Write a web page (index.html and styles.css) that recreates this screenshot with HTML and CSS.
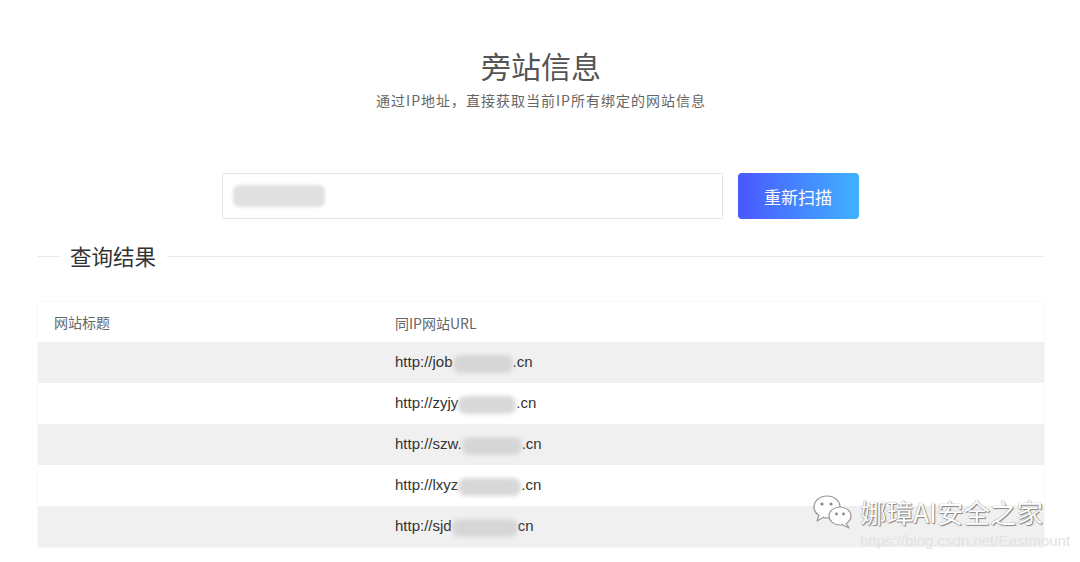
FILE: index.html
```html
<!DOCTYPE html>
<html lang="zh-CN">
<head>
<meta charset="utf-8">
<title>旁站信息</title>
<link rel="stylesheet" href="styles.css">
</head>
<body>
<div class="page">
  <header class="head">
    <h1 class="title">旁站信息</h1>
    <p class="subtitle">通过IP地址，直接获取当前IP所有绑定的网站信息</p>
  </header>

  <div class="search">
    <div class="input"><span class="blur blur-input"></span></div>
    <button class="btn">重新扫描</button>
  </div>

  <div class="section-title">
    <span class="line short"></span>
    <span class="label">查询结果</span>
    <span class="line long"></span>
  </div>

  <div class="table">
    <div class="row thead">
      <div class="c1">网站标题</div>
      <div class="c2">同IP网站URL</div>
    </div>
    <div class="row gray">
      <div class="c1"></div>
      <div class="c2">http://job<span class="blur" style="width:60px"></span>.cn</div>
    </div>
    <div class="row">
      <div class="c1"></div>
      <div class="c2">http://zyjy<span class="blur" style="width:58px"></span>.cn</div>
    </div>
    <div class="row gray">
      <div class="c1"></div>
      <div class="c2">http://szw.<span class="blur" style="width:60px"></span>.cn</div>
    </div>
    <div class="row">
      <div class="c1"></div>
      <div class="c2">http://lxyz<span class="blur" style="width:63px"></span>.cn</div>
    </div>
    <div class="row gray">
      <div class="c1"></div>
      <div class="c2">http://sjd<span class="blur" style="width:66px"></span>cn</div>
    </div>
  </div>
</div>

<div class="watermark">
  <div class="wm-top">
    <svg class="wechat" width="42" height="36" viewBox="0 0 42 36">
      <ellipse cx="15" cy="13" rx="13" ry="11" fill="#fff" stroke="#999" stroke-width="1.2"/>
      <path d="M7 21 L5 27 L12 23" fill="#fff" stroke="#999" stroke-width="1.2" stroke-linejoin="round"/>
      <circle cx="10" cy="10" r="1.6" fill="#888"/>
      <circle cx="19" cy="10" r="1.6" fill="#888"/>
      <ellipse cx="28" cy="22" rx="11" ry="9" fill="#fff" stroke="#999" stroke-width="1.2"/>
      <path d="M34 29 L37 34 L30 30.5" fill="#fff" stroke="#999" stroke-width="1.2" stroke-linejoin="round"/>
      <circle cx="24.5" cy="20" r="1.4" fill="#888"/>
      <circle cx="31.5" cy="20" r="1.4" fill="#888"/>
    </svg>
    <span class="wm-name">娜璋AI安全之家</span>
  </div>
  <div class="wm-url">https://blog.csdn.net/Eastmount</div>
</div>
</body>
</html>
```

FILE: styles.css
```css
* { box-sizing: border-box; }
html, body { margin: 0; padding: 0; background: #fff; }
body {
  width: 1080px;
  height: 562px;
  overflow: hidden;
  position: relative;
  font-family: "Liberation Sans", "Noto Sans CJK SC", sans-serif;
  color: #333;
}
.page { padding: 0 36px 0 38px; }
.head { text-align: center; }
.title {
  margin: 45px 0 0;
  font-family: "Noto Sans CJK SC", sans-serif;
  font-weight: 400;
  font-size: 30px;
  line-height: 40px;
  color: #555;
}
.subtitle {
  margin: 5px 0 0;
  font-family: "Noto Sans CJK SC", sans-serif;
  font-size: 14px;
  letter-spacing: 1px;
  line-height: 20px;
  color: #666;
}
.search {
  margin-top: 63px;
  display: flex;
  justify-content: center;
  gap: 15px;
}
.input {
  width: 501px;
  height: 46px;
  margin-left: 148px;
  border: 1px solid #e4e4e4;
  border-radius: 2px;
  display: flex;
  align-items: center;
  padding-left: 10px;
}
.btn {
  width: 121px;
  height: 46px;
  margin-right: 150px;
  border: 0;
  border-radius: 4px;
  background: linear-gradient(90deg, #4a57fe 0%, #3fb2ff 100%);
  color: #fff;
  font-family: "Noto Sans CJK SC", sans-serif;
  font-size: 17px;
}
.blur {
  display: inline-block;
  height: 18px;
  vertical-align: middle;
  background: #d4d4d4;
  border-radius: 8px;
  filter: blur(2px);
  opacity: .9;
}
.blur-input {
  width: 92px;
  height: 22px;
  background: #dedddd;
  border-radius: 6px;
  filter: blur(1.5px);
}
.section-title {
  margin-top: 23px;
  display: flex;
  align-items: center;
  height: 28px;
}
.line { height: 1px; background: #e8e8e8; }
.line.short { width: 22px; }
.line.long { flex: 1; }
.label {
  padding: 0 11px 0 10px;
  font-family: "Noto Sans CJK SC", sans-serif;
  font-size: 21.5px;
  line-height: 28px;
  color: #333;
}
.table {
  margin-top: 32px;
  box-shadow: 0 0 3px rgba(0,0,0,.06);
}
.row {
  display: flex;
  height: 41px;
  align-items: center;
  font-size: 15px;
  color: #333;
}
.row.thead {
  height: 40px;
  font-family: "Noto Sans CJK SC", "Liberation Sans", sans-serif;
  font-size: 14px;
  color: #666;
}
.row.gray { background: #f0f0f0; }
.c1 { width: 341px; padding-left: 16px; }
.c2 { flex: 1; padding-left: 16px; padding-top: 1px; }
.watermark {
  position: absolute;
  left: 812px;
  top: 494px;
}
.wm-top { display: flex; align-items: center; gap: 6px; }
.wm-name {
  font-family: "Noto Sans CJK SC", sans-serif;
  font-size: 26.5px;
  line-height: 36px;
  color: #fff;
  text-shadow: 0 0 1px #666, 1px 1px 1px #888;
}
.wm-url {
  margin: 2px 0 0 48px;
  font-family: "Liberation Sans", sans-serif;
  font-size: 15px;
  color: #e2e2e2;
}
```
